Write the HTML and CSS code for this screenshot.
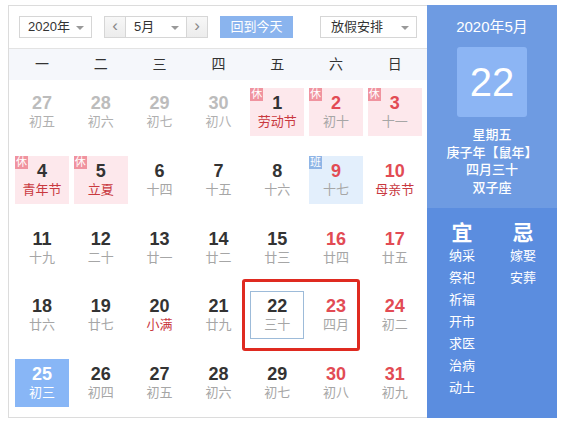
FILE: index.html
```html
<!DOCTYPE html>
<html lang="zh">
<head>
<meta charset="utf-8">
<link rel="stylesheet" href="styles.css">
</head>
<body>
<div class="cal">
  <div class="main">
    <div class="toolbar">
      <div class="sel sel-year">2020年<span class="caret"></span></div>
      <div class="month-group">
        <div class="nav">&lsaquo;</div>
        <div class="sel sel-month">5月<span class="caret"></span></div>
        <div class="nav">&rsaquo;</div>
      </div>
      <div class="today-btn">回到今天</div>
      <div class="sel sel-hol">放假安排<span class="caret"></span></div>
    </div>
    <div class="weekdays">
      <span>一</span><span>二</span><span>三</span><span>四</span><span>五</span><span>六</span><span>日</span>
    </div>
    <div class="grid">
      <div class="cell other"><b>27</b><i>初五</i></div>
      <div class="cell other"><b>28</b><i>初六</i></div>
      <div class="cell other"><b>29</b><i>初七</i></div>
      <div class="cell other"><b>30</b><i>初八</i></div>
      <div class="cell rest"><span class="tag">休</span><b>1</b><i class="fest">劳动节</i></div>
      <div class="cell rest wk"><span class="tag">休</span><b>2</b><i>初十</i></div>
      <div class="cell rest wk"><span class="tag">休</span><b>3</b><i>十一</i></div>

      <div class="cell rest"><span class="tag">休</span><b>4</b><i class="fest">青年节</i></div>
      <div class="cell rest"><span class="tag">休</span><b>5</b><i class="fest">立夏</i></div>
      <div class="cell"><b>6</b><i>十四</i></div>
      <div class="cell"><b>7</b><i>十五</i></div>
      <div class="cell"><b>8</b><i>十六</i></div>
      <div class="cell work wk"><span class="tag">班</span><b>9</b><i>十七</i></div>
      <div class="cell wk"><b>10</b><i class="fest">母亲节</i></div>

      <div class="cell"><b>11</b><i>十九</i></div>
      <div class="cell"><b>12</b><i>二十</i></div>
      <div class="cell"><b>13</b><i>廿一</i></div>
      <div class="cell"><b>14</b><i>廿二</i></div>
      <div class="cell"><b>15</b><i>廿三</i></div>
      <div class="cell wk"><b>16</b><i>廿四</i></div>
      <div class="cell wk"><b>17</b><i>廿五</i></div>

      <div class="cell"><b>18</b><i>廿六</i></div>
      <div class="cell"><b>19</b><i>廿七</i></div>
      <div class="cell"><b>20</b><i class="fest">小满</i></div>
      <div class="cell"><b>21</b><i>廿九</i></div>
      <div class="cell today"><b>22</b><i>三十</i></div>
      <div class="cell wk"><b>23</b><i>四月</i></div>
      <div class="cell wk"><b>24</b><i>初二</i></div>

      <div class="cell picked"><b>25</b><i>初三</i></div>
      <div class="cell"><b>26</b><i>初四</i></div>
      <div class="cell"><b>27</b><i>初五</i></div>
      <div class="cell"><b>28</b><i>初六</i></div>
      <div class="cell"><b>29</b><i>初七</i></div>
      <div class="cell wk"><b>30</b><i>初八</i></div>
      <div class="cell wk"><b>31</b><i>初九</i></div>
    </div>
    <div class="mark"></div>
  </div>
  <div class="side">
    <div class="side-top">
      <div class="side-title">2020年5月</div>
      <div class="big-day">22</div>
      <div class="info">
        <div>星期五</div>
        <div>庚子年【鼠年】</div>
        <div>四月三十</div>
        <div>双子座</div>
      </div>
    </div>
    <div class="side-bottom">
      <div class="col">
        <div class="col-head">宜</div>
        <div>纳采</div><div>祭祀</div><div>祈福</div><div>开市</div><div>求医</div><div>治病</div><div>动土</div>
      </div>
      <div class="col">
        <div class="col-head">忌</div>
        <div>嫁娶</div><div>安葬</div>
      </div>
    </div>
  </div>
</div>
</body>
</html>
```
FILE: styles.css
```css
* { box-sizing: border-box; }
body {
  margin: 0;
  background: #fff;
  font-family: "Liberation Sans", "Noto Sans CJK SC", sans-serif;
  color: #333;
}
.cal {
  display: flex;
  margin: 5px 0 0 8px;
  width: 549px;
  height: 413px;
  border: 1px solid #dcdcdc;
  border-right: none;
}
.main {
  position: relative;
  width: 418px;
}
.toolbar {
  display: flex;
  align-items: center;
  height: 42px;
  padding: 0 0 0 10px;
}
.sel {
  position: relative;
  height: 22px;
  border: 1px solid #d6d6d6;
  background: #fff;
  font-size: 13px;
  line-height: 20px;
  padding-left: 8px;
  color: #333;
}
.caret {
  position: absolute;
  right: 7px;
  top: 9px;
  width: 0;
  height: 0;
  border-left: 4px solid transparent;
  border-right: 4px solid transparent;
  border-top: 4px solid #999;
}
.sel-year { width: 73px; }
.month-group {
  display: flex;
  margin-left: 12px;
}
.nav {
  width: 22px;
  height: 22px;
  border: 1px solid #d6d6d6;
  background: linear-gradient(#f7f7f7, #ececec);
  color: #888;
  font-size: 17px;
  line-height: 18px;
  text-align: center;
}
.sel-month {
  width: 60px;
  border-left: none;
  border-right: none;
}
.today-btn {
  margin-left: 12px;
  width: 73px;
  height: 22px;
  background: #8ab4ee;
  color: #fff;
  font-size: 13px;
  line-height: 22px;
  text-align: center;
}
.sel-hol {
  margin-left: 27px;
  width: 97px;
  padding-left: 10px;
}
.weekdays {
  display: grid;
  grid-template-columns: repeat(7, 54px);
  column-gap: 4.8px;
  padding-left: 6px;
  height: 32px;
  border-top: 1px solid #e3e3e3;
  background: #f5f7fb;
  font-size: 14px;
  line-height: 30px;
  text-align: center;
  color: #333;
}
.grid {
  display: grid;
  grid-template-columns: repeat(7, 54px);
  grid-auto-rows: 48px;
  column-gap: 4.8px;
  row-gap: 19.8px;
  padding: 8px 0 0 6px;
}
.cell {
  position: relative;
  text-align: center;
  padding-top: 5px;
}
.cell b {
  display: block;
  font-size: 18px;
  line-height: 20px;
  font-weight: bold;
  color: #333;
}
.cell i {
  display: block;
  font-style: normal;
  font-size: 13px;
  line-height: 18px;
  color: #a6a6a6;
}
.cell.wk b { color: #e24b54; }
.cell.other b { color: #bcbcbc; }
.cell.other i { color: #b0b0b0; }
.cell i.fest { color: #c9393f; }
.cell.rest { background: #fde8ec; }
.cell.work { background: #e3effc; }
.tag {
  position: absolute;
  left: 0;
  top: 0;
  width: 13px;
  height: 13px;
  font-size: 11px;
  line-height: 13px;
  color: #fff;
  text-align: center;
  background: #f0939f;
}
.cell.work .tag { background: #8fb5e6; }
.cell.today {
  border: 1px solid #9dbbd9;
  padding-top: 4px;
}
.cell.today b { color: #333; }
.cell.picked { background: #88b6f6; }
.cell.picked b, .cell.picked i { color: #fff; }
.mark {
  position: absolute;
  left: 233px;
  top: 273px;
  width: 118px;
  height: 72px;
  border: 3px solid #df2a20;
  border-radius: 3px;
}
.side {
  width: 130px;
  margin-top: -1px;
  height: 414px;
  display: flex;
  flex-direction: column;
  color: #fff;
}
.side-top {
  height: 203px;
  background: #6e9be2;
  display: flex;
  flex-direction: column;
  align-items: center;
  padding-top: 12px;
}
.side-title {
  font-size: 15px;
  line-height: 20px;
}
.big-day {
  margin-top: 10px;
  width: 70px;
  height: 70px;
  background: #8cb5f4;
  border-radius: 3px;
  font-size: 40px;
  line-height: 70px;
  text-align: center;
}
.info {
  margin-top: 9px;
  font-size: 13px;
  line-height: 17.7px;
  text-align: center;
  font-weight: 500;
}
.side-bottom {
  flex: 1;
  background: #5b8ddf;
  display: flex;
  gap: 21px;
  padding: 13px 0 0 15px;
}
.col {
  width: 40px;
  text-align: center;
  font-size: 13px;
  line-height: 22px;
}
.col-head {
  font-size: 21px;
  font-weight: bold;
  line-height: 24px;
  margin-bottom: 0;
}
```
